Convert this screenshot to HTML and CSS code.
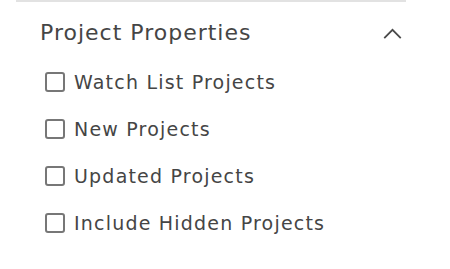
FILE: index.html
```html
<!DOCTYPE html>
<html lang="en">
<head>
  <meta charset="UTF-8" />
  <title>Project Properties</title>
  <link rel="stylesheet" href="styles.css">
</head>
<body>
  <div class="panel">
    <div class="panel-header">
      <h2>Project Properties</h2>
      <svg class="chevron" viewBox="0 0 20 12" fill="none"><path d="M1 11L10 2l9 9"/></svg>
    </div>
    <ul class="options">
      <li><label><input type="checkbox"><span class="box"></span>Watch List Projects</label></li>
      <li><label><input type="checkbox"><span class="box"></span>New Projects</label></li>
      <li><label><input type="checkbox"><span class="box"></span>Updated Projects</label></li>
      <li><label><input type="checkbox"><span class="box"></span>Include Hidden Projects</label></li>
    </ul>
  </div>
</body>
</html>
```

FILE: styles.css
```css
:root {
  --text: #454545;
  --line: #e2e2e2;
  --box: #777;
}
body {
  margin: 0;
  background: white;
  font-family: 'DejaVu Sans', sans-serif;
  color: var(--text);
}
.panel {
  width: 390px;
  margin-left: 16px;
  border-top: 2px solid var(--line);
}
.panel-header {
  display: flex;
  align-items: center;
  justify-content: space-between;
  padding: 17px 4px 0 24px;
}
h2 {
  margin: 0;
  font-size: 22px;
  font-weight: 400;
  letter-spacing: 1px;
  line-height: 28px;
}
.chevron {
  width: 19px;
  height: 11px;
  stroke: #4a4a4a;
  stroke-width: 2;
}
.options {
  list-style: none;
  margin: 0;
  padding: 11px 0 0 29px;
}
.options li {
  height: 47px;
  display: flex;
  align-items: center;
}
.options label {
  display: flex;
  align-items: center;
  gap: 9px;
  font-size: 19px;
  letter-spacing: 1.2px;
  cursor: pointer;
}
.options input {
  display: none;
}
.box {
  width: 16px;
  height: 16px;
  border: 2px solid var(--box);
  border-radius: 3px;
}
```
